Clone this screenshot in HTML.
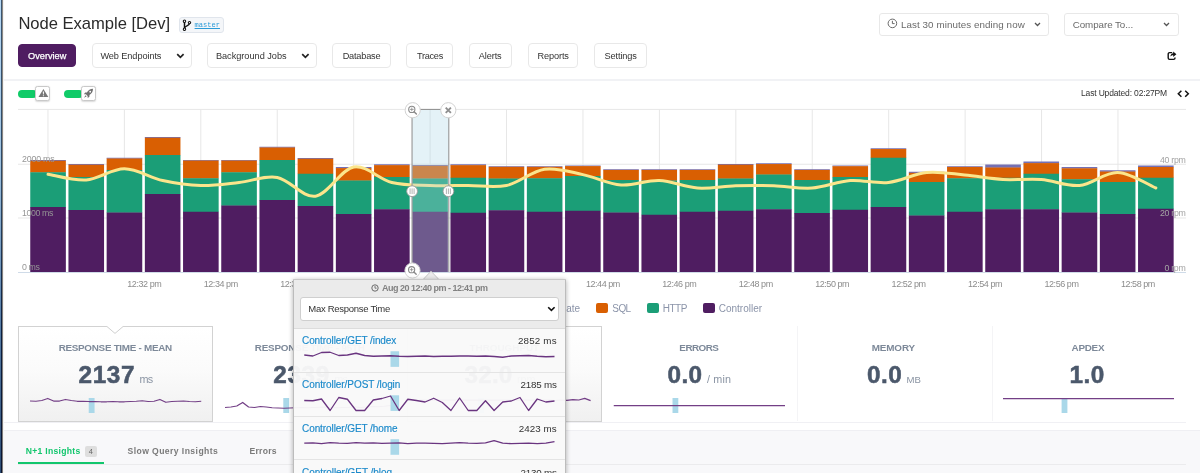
<!DOCTYPE html>
<html><head><meta charset="utf-8"><title>Node Example [Dev]</title>
<style>
html,body{margin:0;padding:0;}
body{width:1200px;height:473px;overflow:hidden;background:#fff;position:relative;font-family:"Liberation Sans",sans-serif;}
#root{position:absolute;left:0;top:0;width:1200px;height:473px;overflow:hidden;will-change:transform;}
.abs{position:absolute;}
.t{position:absolute;white-space:pre;line-height:1;}
.nb{position:absolute;top:43px;height:25px;box-sizing:border-box;border:1px solid #e8e8e8;border-radius:4px;background:#fff;}
.nb.on{background:#4f1d61;border-color:#4f1d61;top:44px;height:23px;}
.dd{position:absolute;top:13px;height:22.5px;box-sizing:border-box;border:1px solid #e8e8e8;border-radius:3px;background:#fff;}
.pill{position:absolute;top:89.6px;height:8px;width:19px;border-radius:4px;background:#10cb68;}
.tg{position:absolute;top:86px;width:14.8px;height:15px;box-sizing:border-box;border:1px solid #c9c9c9;border-radius:2.5px;background:#fff;box-shadow:0 0.5px 1.5px rgba(0,0,0,.15);}
.card{position:absolute;top:326px;height:96px;width:194.8px;box-sizing:border-box;border:1px solid #d2d2d2;background:linear-gradient(#ffffff 0%,#fbfbfb 45%,#f0f0f0 100%);}
.vs{position:absolute;top:326px;height:95px;width:1px;background:#f4f4f6;}
.lg{position:absolute;top:303px;width:12px;height:10px;border-radius:2px;}
#pop{position:absolute;left:293px;top:279px;width:273px;height:200px;box-sizing:border-box;border:1px solid #bcbcbc;border-top-color:#c8c8c8;border-radius:1px 1px 0 0;box-shadow:0 1px 5px rgba(0,0,0,.32);}
#pop .hd{position:absolute;left:0;right:0;top:0;height:48px;background:#ebebeb;}
#pop .list{position:absolute;left:0;right:0;top:48px;bottom:0;background:rgba(249,249,249,0.96);border-top:1px solid #dcdcdc;}
#pop .sep{position:absolute;left:0;right:0;height:1px;background:#e4e4e4;}
#pop .sel{position:absolute;left:6px;top:17px;width:258.6px;height:24px;box-sizing:border-box;border:1px solid #cfcfcf;border-radius:3px;background:#fff;}
</style></head><body>
<div id="root">
<!-- left edge strip -->
<div class="abs" style="left:0;top:0;width:1px;height:473px;background:linear-gradient(#b6d8f4 0%,#9cc0de 35%,#5d84ad 65%,#2c4c74 100%)"></div>
<div class="abs" style="left:1px;top:0;width:1px;height:473px;background:linear-gradient(#3d5670 0%,#2c4763 40%,#0c1f3f 70%,#0a1530 100%)"></div>
<div class="abs" style="left:2px;top:0;width:1px;height:473px;background:linear-gradient(#8d8a86,#7d7a78)"></div>
<div class="abs" style="left:3px;top:0;width:1px;height:473px;background:#f4f4f4"></div>

<!-- header -->
<div class="abs" style="left:179.2px;top:17px;width:44.8px;height:15.5px;box-sizing:border-box;border:1px solid #e0e5ec;border-radius:3px;background:#f4f6f9"></div>
<svg class="abs" style="left:182px;top:18.5px" width="10" height="12.5" viewBox="0 0 10 12.5"><g fill="none" stroke="#111" stroke-width="1.45"><path d="M2.5 2.6V9.8"/><path d="M7.5 4.2c0 2.9-5 2.3-5 5"/></g><g fill="#fff" stroke="#111" stroke-width="1.05"><circle cx="2.5" cy="2.2" r="1.2"/><circle cx="2.5" cy="10.2" r="1.2"/><circle cx="7.5" cy="3.6" r="1.2"/></g></svg>
<div class="dd" style="left:879px;width:170px"></div>
<div class="dd" style="left:1064.2px;width:114.5px"></div>
<svg class="abs" style="left:886.5px;top:18px" width="11" height="11" viewBox="0 0 11 11"><circle cx="5.4" cy="5.4" r="4.3" fill="none" stroke="#6a6a6a" stroke-width="1"/><path d="M5.4 2.8V5.6H7.6" fill="none" stroke="#6a6a6a" stroke-width="1"/></svg>
<svg class="abs" style="left:1034px;top:22px" width="7" height="5" viewBox="0 0 7 5"><path d="M1 1l2.5 2.5L6 1" fill="none" stroke="#555" stroke-width="1.3"/></svg>
<svg class="abs" style="left:1163px;top:22px" width="7" height="5" viewBox="0 0 7 5"><path d="M1 1l2.5 2.5L6 1" fill="none" stroke="#555" stroke-width="1.3"/></svg>
<div class="nb on" style="left:18.4px;width:57.6px"></div><div class="nb " style="left:92.0px;width:99.5px"></div><div class="nb " style="left:207.0px;width:109.8px"></div><div class="nb " style="left:332.2px;width:58.4px"></div><div class="nb " style="left:406.4px;width:46.8px"></div><div class="nb " style="left:469.3px;width:42.5px"></div><div class="nb " style="left:527.7px;width:50.7px"></div><div class="nb " style="left:594.3px;width:52.4px"></div>
<svg class="abs" style="left:176px;top:53px" width="9" height="6" viewBox="0 0 9 6"><path d="M1.2 1.2l3.2 3.2 3.2-3.2" fill="none" stroke="#222" stroke-width="1.7"/></svg>
<svg class="abs" style="left:300.5px;top:53px" width="9" height="6" viewBox="0 0 9 6"><path d="M1.2 1.2l3.2 3.2 3.2-3.2" fill="none" stroke="#222" stroke-width="1.7"/></svg>
<svg class="abs" style="left:1166.5px;top:51px" width="10" height="10" viewBox="0 0 10 10"><path d="M5.2 1.6H2.6a1.4 1.4 0 0 0-1.4 1.4v4a1.4 1.4 0 0 0 1.4 1.4h4a1.4 1.4 0 0 0 1.4-1.4V6.4" fill="none" stroke="#111" stroke-width="1.4"/><path d="M6.2 0.6L9.4 3.3 6.2 6V4.3C4.8 4.3 4 4.8 3.4 5.8 3.5 3.7 4.6 2.5 6.2 2.3z" fill="#111"/></svg>
<div class="abs" style="left:4px;top:79.3px;width:1196px;height:1.6px;background:#f1f2f5"></div>
<!-- toggles -->
<div class="pill" style="left:17.8px"></div><div class="tg" style="left:35.2px"></div>
<div class="pill" style="left:64px"></div><div class="tg" style="left:81px;width:15px"></div>
<svg class="abs" style="left:37.5px;top:88px" width="11" height="10" viewBox="0 0 11 10"><path d="M5.4 0.9L10.3 9.1H0.5z" fill="#777"/><path d="M4.8 3.6h1.2l-.2 3h-.8zM4.9 7.2h1v1h-1z" fill="#fff"/></svg>
<svg class="abs" style="left:82.8px;top:88.2px" width="11" height="11" viewBox="0 0 11 11"><g fill="#707070"><path d="M10 0.8C7.2 0.9 5.2 2.2 3.9 4.4L2.2 4.5 0.9 6.2 2.9 6.3 4.6 8 4.7 10 6.4 8.7 6.5 7C8.7 5.7 10 3.7 10 0.8z"/><path d="M2.6 7.2L1 9.8 3.7 8.3z"/></g><circle cx="7.2" cy="3.7" r="0.9" fill="#fff"/></svg>
<svg class="abs" style="left:1177px;top:89.5px" width="13" height="8" viewBox="0 0 13 8"><path d="M4.4 0.8L1.3 3.8 4.4 6.8M8.2 0.8l3.1 3-3.1 3" fill="none" stroke="#111" stroke-width="1.5"/></svg>
<svg class="abs" style="left:0;top:0" width="1200" height="300" viewBox="0 0 1200 300"><rect x="47.45" y="109.4" width="1" height="162.6" fill="#e7e7e7"/>
<rect x="123.88" y="109.4" width="1" height="162.6" fill="#e7e7e7"/>
<rect x="200.31" y="109.4" width="1" height="162.6" fill="#e7e7e7"/>
<rect x="276.74" y="109.4" width="1" height="162.6" fill="#e7e7e7"/>
<rect x="353.17" y="109.4" width="1" height="162.6" fill="#e7e7e7"/>
<rect x="429.60" y="109.4" width="1" height="162.6" fill="#e7e7e7"/>
<rect x="506.03" y="109.4" width="1" height="162.6" fill="#e7e7e7"/>
<rect x="582.46" y="109.4" width="1" height="162.6" fill="#e7e7e7"/>
<rect x="658.89" y="109.4" width="1" height="162.6" fill="#e7e7e7"/>
<rect x="735.32" y="109.4" width="1" height="162.6" fill="#e7e7e7"/>
<rect x="811.75" y="109.4" width="1" height="162.6" fill="#e7e7e7"/>
<rect x="888.18" y="109.4" width="1" height="162.6" fill="#e7e7e7"/>
<rect x="964.61" y="109.4" width="1" height="162.6" fill="#e7e7e7"/>
<rect x="1041.04" y="109.4" width="1" height="162.6" fill="#e7e7e7"/>
<rect x="1117.47" y="109.4" width="1" height="162.6" fill="#e7e7e7"/>
<rect x="18" y="108.90" width="1168" height="1" fill="#e7e7e7"/>
<rect x="18" y="163.75" width="1168" height="1" fill="#e7e7e7"/>
<rect x="18" y="217.50" width="1168" height="1" fill="#e7e7e7"/>
<rect x="18" y="272" width="1168" height="1" fill="#cfdbe8"/>
<rect x="30.25" y="160.00" width="35.60" height="1.05" fill="#7570b3"/>
<rect x="30.25" y="160.75" width="35.60" height="11.80" fill="#d95f02"/>
<rect x="30.25" y="172.25" width="35.60" height="35.05" fill="#1b9e77"/>
<rect x="30.25" y="207.00" width="35.60" height="65.00" fill="#4f1d61"/>
<rect x="68.45" y="164.00" width="35.60" height="1.05" fill="#7570b3"/>
<rect x="68.45" y="164.75" width="35.60" height="12.55" fill="#d95f02"/>
<rect x="68.45" y="177.00" width="35.60" height="33.30" fill="#1b9e77"/>
<rect x="68.45" y="210.00" width="35.60" height="62.00" fill="#4f1d61"/>
<rect x="106.65" y="157.75" width="35.60" height="1.05" fill="#7570b3"/>
<rect x="106.65" y="158.50" width="35.60" height="11.80" fill="#d95f02"/>
<rect x="106.65" y="170.00" width="35.60" height="42.80" fill="#1b9e77"/>
<rect x="106.65" y="212.50" width="35.60" height="59.50" fill="#4f1d61"/>
<rect x="144.85" y="137.00" width="35.60" height="1.05" fill="#7570b3"/>
<rect x="144.85" y="137.75" width="35.60" height="17.55" fill="#d95f02"/>
<rect x="144.85" y="155.00" width="35.60" height="39.30" fill="#1b9e77"/>
<rect x="144.85" y="194.00" width="35.60" height="78.00" fill="#4f1d61"/>
<rect x="183.05" y="160.00" width="35.60" height="0.90" fill="#7570b3"/>
<rect x="183.05" y="160.60" width="35.60" height="17.95" fill="#d95f02"/>
<rect x="183.05" y="178.25" width="35.60" height="33.80" fill="#1b9e77"/>
<rect x="183.05" y="211.75" width="35.60" height="60.25" fill="#4f1d61"/>
<rect x="221.25" y="160.00" width="35.60" height="0.90" fill="#7570b3"/>
<rect x="221.25" y="160.60" width="35.60" height="11.95" fill="#d95f02"/>
<rect x="221.25" y="172.25" width="35.60" height="33.55" fill="#1b9e77"/>
<rect x="221.25" y="205.50" width="35.60" height="66.50" fill="#4f1d61"/>
<rect x="259.45" y="146.75" width="35.60" height="1.05" fill="#7570b3"/>
<rect x="259.45" y="147.50" width="35.60" height="12.80" fill="#d95f02"/>
<rect x="259.45" y="160.00" width="35.60" height="40.30" fill="#1b9e77"/>
<rect x="259.45" y="200.00" width="35.60" height="72.00" fill="#4f1d61"/>
<rect x="297.65" y="158.00" width="35.60" height="1.05" fill="#7570b3"/>
<rect x="297.65" y="158.75" width="35.60" height="15.30" fill="#d95f02"/>
<rect x="297.65" y="173.75" width="35.60" height="32.55" fill="#1b9e77"/>
<rect x="297.65" y="206.00" width="35.60" height="66.00" fill="#4f1d61"/>
<rect x="335.85" y="167.00" width="35.60" height="1.40" fill="#7570b3"/>
<rect x="335.85" y="168.10" width="35.60" height="12.70" fill="#d95f02"/>
<rect x="335.85" y="180.50" width="35.60" height="33.80" fill="#1b9e77"/>
<rect x="335.85" y="214.00" width="35.60" height="58.00" fill="#4f1d61"/>
<rect x="374.05" y="164.25" width="35.60" height="1.20" fill="#7570b3"/>
<rect x="374.05" y="165.15" width="35.60" height="12.15" fill="#d95f02"/>
<rect x="374.05" y="177.00" width="35.60" height="32.55" fill="#1b9e77"/>
<rect x="374.05" y="209.25" width="35.60" height="62.75" fill="#4f1d61"/>
<rect x="412.25" y="165.00" width="35.60" height="1.10" fill="#7570b3"/>
<rect x="412.25" y="165.80" width="35.60" height="13.00" fill="#d95f02"/>
<rect x="412.25" y="178.50" width="35.60" height="33.55" fill="#1b9e77"/>
<rect x="412.25" y="211.75" width="35.60" height="60.25" fill="#4f1d61"/>
<rect x="450.45" y="164.25" width="35.60" height="1.20" fill="#7570b3"/>
<rect x="450.45" y="165.15" width="35.60" height="12.90" fill="#d95f02"/>
<rect x="450.45" y="177.75" width="35.60" height="35.30" fill="#1b9e77"/>
<rect x="450.45" y="212.75" width="35.60" height="59.25" fill="#4f1d61"/>
<rect x="488.65" y="166.25" width="35.60" height="0.90" fill="#7570b3"/>
<rect x="488.65" y="166.85" width="35.60" height="11.95" fill="#d95f02"/>
<rect x="488.65" y="178.50" width="35.60" height="32.05" fill="#1b9e77"/>
<rect x="488.65" y="210.25" width="35.60" height="61.75" fill="#4f1d61"/>
<rect x="526.85" y="166.25" width="35.60" height="0.90" fill="#7570b3"/>
<rect x="526.85" y="166.85" width="35.60" height="11.70" fill="#d95f02"/>
<rect x="526.85" y="178.25" width="35.60" height="33.80" fill="#1b9e77"/>
<rect x="526.85" y="211.75" width="35.60" height="60.25" fill="#4f1d61"/>
<rect x="565.05" y="165.50" width="35.60" height="0.90" fill="#7570b3"/>
<rect x="565.05" y="166.10" width="35.60" height="10.20" fill="#d95f02"/>
<rect x="565.05" y="176.00" width="35.60" height="35.05" fill="#1b9e77"/>
<rect x="565.05" y="210.75" width="35.60" height="61.25" fill="#4f1d61"/>
<rect x="603.25" y="169.25" width="35.60" height="1.00" fill="#7570b3"/>
<rect x="603.25" y="169.95" width="35.60" height="10.35" fill="#d95f02"/>
<rect x="603.25" y="180.00" width="35.60" height="32.80" fill="#1b9e77"/>
<rect x="603.25" y="212.50" width="35.60" height="59.50" fill="#4f1d61"/>
<rect x="641.45" y="169.25" width="35.60" height="1.00" fill="#7570b3"/>
<rect x="641.45" y="169.95" width="35.60" height="10.85" fill="#d95f02"/>
<rect x="641.45" y="180.50" width="35.60" height="34.55" fill="#1b9e77"/>
<rect x="641.45" y="214.75" width="35.60" height="57.25" fill="#4f1d61"/>
<rect x="679.65" y="169.25" width="35.60" height="1.00" fill="#7570b3"/>
<rect x="679.65" y="169.95" width="35.60" height="10.35" fill="#d95f02"/>
<rect x="679.65" y="180.00" width="35.60" height="32.05" fill="#1b9e77"/>
<rect x="679.65" y="211.75" width="35.60" height="60.25" fill="#4f1d61"/>
<rect x="717.85" y="164.00" width="35.60" height="1.00" fill="#7570b3"/>
<rect x="717.85" y="164.70" width="35.60" height="14.10" fill="#d95f02"/>
<rect x="717.85" y="178.50" width="35.60" height="32.55" fill="#1b9e77"/>
<rect x="717.85" y="210.75" width="35.60" height="61.25" fill="#4f1d61"/>
<rect x="756.05" y="163.25" width="35.60" height="1.10" fill="#7570b3"/>
<rect x="756.05" y="164.05" width="35.60" height="10.75" fill="#d95f02"/>
<rect x="756.05" y="174.50" width="35.60" height="35.05" fill="#1b9e77"/>
<rect x="756.05" y="209.25" width="35.60" height="62.75" fill="#4f1d61"/>
<rect x="794.25" y="169.25" width="35.60" height="1.00" fill="#7570b3"/>
<rect x="794.25" y="169.95" width="35.60" height="10.35" fill="#d95f02"/>
<rect x="794.25" y="180.00" width="35.60" height="33.30" fill="#1b9e77"/>
<rect x="794.25" y="213.00" width="35.60" height="59.00" fill="#4f1d61"/>
<rect x="832.45" y="165.50" width="35.60" height="1.00" fill="#7570b3"/>
<rect x="832.45" y="166.20" width="35.60" height="11.10" fill="#d95f02"/>
<rect x="832.45" y="177.00" width="35.60" height="33.05" fill="#1b9e77"/>
<rect x="832.45" y="209.75" width="35.60" height="62.25" fill="#4f1d61"/>
<rect x="870.65" y="148.25" width="35.60" height="1.10" fill="#7570b3"/>
<rect x="870.65" y="149.05" width="35.60" height="9.00" fill="#d95f02"/>
<rect x="870.65" y="157.75" width="35.60" height="49.55" fill="#1b9e77"/>
<rect x="870.65" y="207.00" width="35.60" height="65.00" fill="#4f1d61"/>
<rect x="908.85" y="171.75" width="35.60" height="1.40" fill="#7570b3"/>
<rect x="908.85" y="172.85" width="35.60" height="9.45" fill="#d95f02"/>
<rect x="908.85" y="182.00" width="35.60" height="33.80" fill="#1b9e77"/>
<rect x="908.85" y="215.50" width="35.60" height="56.50" fill="#4f1d61"/>
<rect x="947.05" y="166.25" width="35.60" height="1.00" fill="#7570b3"/>
<rect x="947.05" y="166.95" width="35.60" height="11.60" fill="#d95f02"/>
<rect x="947.05" y="178.25" width="35.60" height="33.80" fill="#1b9e77"/>
<rect x="947.05" y="211.75" width="35.60" height="60.25" fill="#4f1d61"/>
<rect x="985.25" y="164.50" width="35.60" height="3.30" fill="#7570b3"/>
<rect x="985.25" y="167.50" width="35.60" height="10.55" fill="#d95f02"/>
<rect x="985.25" y="177.75" width="35.60" height="31.80" fill="#1b9e77"/>
<rect x="985.25" y="209.25" width="35.60" height="62.75" fill="#4f1d61"/>
<rect x="1023.45" y="161.50" width="35.60" height="1.90" fill="#7570b3"/>
<rect x="1023.45" y="163.10" width="35.60" height="10.95" fill="#d95f02"/>
<rect x="1023.45" y="173.75" width="35.60" height="35.80" fill="#1b9e77"/>
<rect x="1023.45" y="209.25" width="35.60" height="62.75" fill="#4f1d61"/>
<rect x="1061.65" y="167.00" width="35.60" height="1.60" fill="#7570b3"/>
<rect x="1061.65" y="168.30" width="35.60" height="11.25" fill="#d95f02"/>
<rect x="1061.65" y="179.25" width="35.60" height="33.55" fill="#1b9e77"/>
<rect x="1061.65" y="212.50" width="35.60" height="59.50" fill="#4f1d61"/>
<rect x="1099.85" y="170.25" width="35.60" height="1.60" fill="#7570b3"/>
<rect x="1099.85" y="171.55" width="35.60" height="10.75" fill="#d95f02"/>
<rect x="1099.85" y="182.00" width="35.60" height="32.30" fill="#1b9e77"/>
<rect x="1099.85" y="214.00" width="35.60" height="58.00" fill="#4f1d61"/>
<rect x="1138.05" y="165.50" width="35.60" height="1.80" fill="#7570b3"/>
<rect x="1138.05" y="167.00" width="35.60" height="11.05" fill="#d95f02"/>
<rect x="1138.05" y="177.75" width="35.60" height="31.30" fill="#1b9e77"/>
<rect x="1138.05" y="208.75" width="35.60" height="63.25" fill="#4f1d61"/></svg>
<span class="t" style="left:22.00px;top:155.35px;font-size:8.8px;color:#969696;letter-spacing:-0.179px;">2000 ms</span>
<span class="t" style="left:22.00px;top:209.10px;font-size:8.8px;color:#969696;letter-spacing:-0.393px;">1000 ms</span>
<span class="t" style="left:22.00px;top:263.35px;font-size:8.8px;color:#969696;letter-spacing:-0.395px;">0 ms</span>
<span class="t" style="left:1160.00px;top:155.55px;font-size:8.8px;color:#a4a4a4;letter-spacing:-0.315px;">40 rpm</span>
<span class="t" style="left:1160.00px;top:209.30px;font-size:8.8px;color:#a4a4a4;letter-spacing:-0.315px;">20 rpm</span>
<span class="t" style="left:1164.50px;top:263.55px;font-size:8.8px;color:#a4a4a4;letter-spacing:-0.300px;">0 rpm</span>
<span class="t" style="left:127.30px;top:279.88px;font-size:9px;color:#8c8c8c;letter-spacing:-0.441px;">12:32 pm</span>
<span class="t" style="left:203.73px;top:279.88px;font-size:9px;color:#8c8c8c;letter-spacing:-0.441px;">12:34 pm</span>
<span class="t" style="left:280.16px;top:279.88px;font-size:9px;color:#8c8c8c;letter-spacing:-0.441px;">12:36 pm</span>
<span class="t" style="left:356.59px;top:279.88px;font-size:9px;color:#8c8c8c;letter-spacing:-0.441px;">12:38 pm</span>
<span class="t" style="left:433.02px;top:279.88px;font-size:9px;color:#8c8c8c;letter-spacing:-0.441px;">12:40 pm</span>
<span class="t" style="left:509.45px;top:279.88px;font-size:9px;color:#8c8c8c;letter-spacing:-0.441px;">12:42 pm</span>
<span class="t" style="left:585.88px;top:279.88px;font-size:9px;color:#8c8c8c;letter-spacing:-0.441px;">12:44 pm</span>
<span class="t" style="left:662.31px;top:279.88px;font-size:9px;color:#8c8c8c;letter-spacing:-0.441px;">12:46 pm</span>
<span class="t" style="left:738.74px;top:279.88px;font-size:9px;color:#8c8c8c;letter-spacing:-0.441px;">12:48 pm</span>
<span class="t" style="left:815.17px;top:279.88px;font-size:9px;color:#8c8c8c;letter-spacing:-0.441px;">12:50 pm</span>
<span class="t" style="left:891.60px;top:279.88px;font-size:9px;color:#8c8c8c;letter-spacing:-0.441px;">12:52 pm</span>
<span class="t" style="left:968.03px;top:279.88px;font-size:9px;color:#8c8c8c;letter-spacing:-0.441px;">12:54 pm</span>
<span class="t" style="left:1044.46px;top:279.88px;font-size:9px;color:#8c8c8c;letter-spacing:-0.441px;">12:56 pm</span>
<span class="t" style="left:1120.89px;top:279.88px;font-size:9px;color:#8c8c8c;letter-spacing:-0.441px;">12:58 pm</span>
<svg class="abs" style="left:0;top:0" width="1200" height="300" viewBox="0 0 1200 300"><path d="M48.05 174.25 C54.42 175.21 73.52 180.92 86.25 180.00 C98.98 179.08 111.72 168.67 124.45 168.75 C137.18 168.83 149.92 177.71 162.65 180.50 C175.38 183.29 188.12 185.17 200.85 185.50 C213.58 185.83 226.32 183.83 239.05 182.50 C251.78 181.17 264.52 175.21 277.25 177.50 C289.98 179.79 302.72 198.00 315.45 196.25 C328.18 194.50 340.92 169.29 353.65 167.00 C366.38 164.71 379.12 179.42 391.85 182.50 C404.58 185.58 417.32 185.00 430.05 185.50 C442.78 186.00 455.52 185.50 468.25 185.50 C480.98 185.50 493.72 188.21 506.45 185.50 C519.18 182.79 531.92 171.07 544.65 169.25 C557.38 167.43 570.12 171.97 582.85 174.60 C595.58 177.22 608.32 184.02 621.05 185.00 C633.78 185.98 646.52 180.00 659.25 180.50 C671.98 181.00 684.72 187.12 697.45 188.00 C710.18 188.88 722.92 186.12 735.65 185.75 C748.38 185.38 761.12 185.38 773.85 185.75 C786.58 186.12 799.32 188.88 812.05 188.00 C824.78 187.12 837.52 181.42 850.25 180.50 C862.98 179.58 875.72 183.83 888.45 182.50 C901.18 181.17 913.92 173.75 926.65 172.50 C939.38 171.25 952.12 173.83 964.85 175.00 C977.58 176.17 990.32 178.75 1003.05 179.50 C1015.78 180.25 1028.52 178.50 1041.25 179.50 C1053.98 180.50 1066.72 186.67 1079.45 185.50 C1092.18 184.33 1104.92 172.08 1117.65 172.50 C1130.38 172.92 1149.48 185.42 1155.85 188.00" fill="none" stroke="#fbe58c" stroke-width="3" stroke-linecap="round" stroke-linejoin="round"/></svg>
<svg class="abs" style="left:0;top:0" width="1200" height="300" viewBox="0 0 1200 300">
<rect x="412" y="109.4" width="36.8" height="162.6" fill="rgba(173,216,230,0.33)"/>
<rect x="411.4" y="109" width="1.3" height="163" fill="rgba(150,150,150,0.85)"/>
<rect x="448.1" y="109" width="1.3" height="163" fill="rgba(150,150,150,0.85)"/>
<rect x="411.4" y="108.9" width="38" height="1.1" fill="rgba(140,140,140,0.9)"/>
<g fill="#fff" stroke="#d2d2d2" stroke-width="1">
<circle cx="412.7" cy="110.2" r="7.6"/><circle cx="448.3" cy="110.2" r="7.6"/><circle cx="412.5" cy="270.5" r="7.6"/>
</g>
<g fill="#fff" stroke="#9a9a9a" stroke-width="0.9">
<circle cx="412.1" cy="191.2" r="5.4"/><circle cx="448.4" cy="191.2" r="5.4"/>
</g>
<g stroke="#aaa" stroke-width="0.9">
<path d="M410.1 188.4v5.6M412.1 188.4v5.6M414.1 188.4v5.6M446.4 188.4v5.6M448.4 188.4v5.6M450.4 188.4v5.6"/>
</g>
<g fill="none" stroke="#8a8a8a" stroke-width="1.1" stroke-linecap="round">
<circle cx="411.8" cy="109.4" r="3.1"/><path d="M414.1 111.7L416.4 114" stroke-width="1.4"/><path d="M410.3 109.4h3M411.8 107.9v3" stroke-width="0.8"/>
<circle cx="411.6" cy="269.7" r="3.1"/><path d="M413.9 272L416.2 274.3" stroke-width="1.4"/><path d="M410.1 269.7h3M411.6 268.2v3" stroke-width="0.8"/>
</g>
<path d="M445.7 107.6l5.2 5.2M450.9 107.6l-5.2 5.2" stroke="#8f8f8f" stroke-width="1.9" fill="none"/>
</svg>
<div class="lg" style="left:523px;background:#7570b3"></div><div class="lg" style="left:596.2px;background:#d95f02"></div><div class="lg" style="left:646.6px;background:#1b9e77"></div><div class="lg" style="left:702.7px;background:#4f1d61"></div>
<div class="card" style="left:18px"></div><div class="card" style="left:407px"></div>
<svg class="abs" style="left:106px;top:325px" width="18" height="10" viewBox="0 0 18 10"><path d="M0.9 0.5H17.1V1.6L9 8.6 0.9 1.6z" fill="#fff"/><path d="M0.9 1.5L9 8.4 17.1 1.5" fill="none" stroke="#cfcfcf" stroke-width="1"/></svg>
<div class="vs" style="left:797px"></div><div class="vs" style="left:991.5px"></div>
<div class="abs" style="left:4px;top:422px;width:1182px;height:1px;background:#f0f0f4"></div>
<div class="abs" style="left:4px;top:429.6px;width:1196px;height:44px;background:#f8f8fa;border-top:1px solid #efeff3"></div>
<div class="abs" style="left:18px;top:463.8px;width:1168px;height:1.2px;background:#ebebed"></div>
<div class="abs" style="left:18px;top:461.5px;width:86.3px;height:2.6px;background:#12c66d"></div>
<div class="abs" style="left:85px;top:446px;width:11.8px;height:10.6px;border-radius:2px;background:#dedede"></div>
<svg class="abs" style="left:0;top:0" width="1200" height="473" viewBox="0 0 1200 473"><rect x="88.75" y="398.00" width="5.80" height="15.00" fill="#a5d6e8" opacity="0.95"/><path d="M30.00 401.00 L35.91 401.25 L41.81 400.50 L47.72 398.50 L53.62 401.00 L59.53 401.00 L65.43 399.50 L71.34 400.50 L77.24 401.25 L83.15 401.25 L89.05 401.50 L94.96 401.50 L100.86 401.75 L106.77 401.75 L112.67 401.50 L118.58 401.75 L124.48 401.75 L130.39 401.50 L136.29 401.25 L142.20 400.75 L148.10 401.50 L154.01 401.25 L159.91 399.50 L165.82 402.25 L171.72 401.50 L177.63 401.25 L183.53 401.00 L189.44 401.50 L195.34 401.75 L201.25 401.25" fill="none" stroke="#733f86" stroke-width="1.25" stroke-linejoin="round"/><rect x="283.30" y="398.00" width="5.80" height="15.00" fill="#a5d6e8" opacity="0.95"/><path d="M225.00 407.50 L230.90 407.00 L236.79 406.00 L242.69 402.50 L248.59 407.00 L254.48 407.50 L260.38 406.50 L266.28 407.00 L272.17 407.75 L278.07 408.00 L283.97 408.25 L289.86 408.00 L295.76 407.75 L301.66 407.50 L307.55 407.75 L313.45 407.50 L319.34 407.25 L325.24 407.00 L331.14 407.50 L337.03 407.75 L342.93 407.50 L348.83 407.25 L354.72 406.75 L360.62 407.50 L366.52 407.00 L372.41 406.50 L378.31 406.75 L384.21 406.25 L390.10 405.50 L396.00 407.00" fill="none" stroke="#733f86" stroke-width="1.25" stroke-linejoin="round"/><rect x="478.00" y="398.00" width="5.80" height="15.00" fill="#a5d6e8" opacity="0.95"/><path d="M419.30 400.00 L425.21 400.00 L431.11 400.00 L437.02 400.00 L442.93 400.00 L448.83 400.00 L454.74 400.00 L460.65 400.00 L466.56 400.00 L472.46 400.00 L478.37 400.00 L484.28 400.00 L490.18 400.00 L496.09 400.00 L502.00 400.00 L507.90 400.00 L513.81 400.00 L519.72 400.00 L525.62 400.00 L531.53 400.00 L537.44 400.00 L543.34 400.00 L549.25 400.00 L555.16 400.50 L561.07 400.00 L566.97 400.30 L572.88 399.60 L578.79 400.00 L584.69 398.30 L590.60 400.60" fill="none" stroke="#733f86" stroke-width="1.25" stroke-linejoin="round"/><rect x="672.50" y="398.00" width="5.80" height="15.00" fill="#a5d6e8" opacity="0.95"/><path d="M613.75 405.50 L785.00 405.50" fill="none" stroke="#733f86" stroke-width="1.25" stroke-linejoin="round"/><rect x="1061.60" y="398.00" width="5.80" height="15.00" fill="#a5d6e8" opacity="0.95"/><path d="M1003.00 398.50 L1174.00 398.50" fill="none" stroke="#733f86" stroke-width="1.25" stroke-linejoin="round"/></svg>
<span class="t" style="left:18.40px;top:16.45px;font-size:16.6px;color:#2b2b2b;letter-spacing:-0.033px;">Node Example [Dev]</span>
<span class="t" style="left:194.60px;top:21.77px;font-size:7px;font-family:'Liberation Mono', monospace;color:#2b9bd8;letter-spacing:0.030px;text-decoration:underline;">master</span>
<span class="t" style="left:901.00px;top:20.30px;font-size:9.8px;color:#6a6a6a;letter-spacing:0.069px;">Last 30 minutes ending now</span>
<span class="t" style="left:1072.70px;top:19.90px;font-size:9.8px;color:#6a6a6a;letter-spacing:-0.066px;">Compare To...</span>
<span class="t" style="left:28.00px;top:51.81px;font-size:9.2px;color:#fff;letter-spacing:0.013px;-webkit-text-stroke:0.25px #fff;">Overview</span>
<span class="t" style="left:100.40px;top:51.81px;font-size:9.2px;color:#333;letter-spacing:-0.089px;">Web Endpoints</span>
<span class="t" style="left:215.90px;top:51.81px;font-size:9.2px;color:#333;letter-spacing:-0.020px;">Background Jobs</span>
<span class="t" style="left:342.70px;top:51.81px;font-size:9.2px;color:#333;letter-spacing:-0.205px;">Database</span>
<span class="t" style="left:416.90px;top:51.81px;font-size:9.2px;color:#333;letter-spacing:-0.275px;">Traces</span>
<span class="t" style="left:478.70px;top:51.81px;font-size:9.2px;color:#333;letter-spacing:-0.100px;">Alerts</span>
<span class="t" style="left:537.60px;top:51.81px;font-size:9.2px;color:#333;letter-spacing:-0.139px;">Reports</span>
<span class="t" style="left:604.50px;top:51.81px;font-size:9.2px;color:#333;letter-spacing:-0.113px;">Settings</span>
<span class="t" style="left:1081.00px;top:88.80px;font-size:8.5px;color:#333;letter-spacing:-0.158px;">Last Updated: 02:27PM</span>
<span class="t" style="left:539.62px;top:303.64px;font-size:10px;color:#8b94a9;letter-spacing:0.000px;">Template</span>
<span class="t" style="left:612.30px;top:303.64px;font-size:10px;color:#8b94a9;letter-spacing:-0.572px;">SQL</span>
<span class="t" style="left:662.70px;top:303.64px;font-size:10px;color:#8b94a9;letter-spacing:-0.452px;">HTTP</span>
<span class="t" style="left:718.80px;top:303.64px;font-size:10px;color:#8b94a9;letter-spacing:-0.016px;">Controller</span>
<span class="t" style="left:58.64px;top:342.92px;font-size:9.9px;font-weight:700;color:#7d8999;letter-spacing:-0.291px;">RESPONSE TIME - MEAN</span>
<span class="t" style="left:78.50px;top:362.83px;font-size:24.3px;font-weight:700;color:#4b586b;letter-spacing:0.672px;-webkit-text-stroke:0.55px #4b586b;">2137</span>
<span class="t" style="left:139.50px;top:374.26px;font-size:10.8px;color:#8a94a3;letter-spacing:-0.703px;">ms</span>
<span class="t" style="left:254.80px;top:342.92px;font-size:9.9px;font-weight:700;color:#7d8999;letter-spacing:-0.207px;">RESPONSE TIME - 95TH</span>
<span class="t" style="left:273.25px;top:362.83px;font-size:24.3px;font-weight:700;color:#4b586b;letter-spacing:0.672px;-webkit-text-stroke:0.55px #4b586b;">2339</span>
<span class="t" style="left:334.25px;top:374.26px;font-size:10.8px;color:#8a94a3;letter-spacing:-0.703px;">ms</span>
<span class="t" style="left:469.49px;top:342.92px;font-size:9.9px;font-weight:700;color:#7d8999;letter-spacing:0.000px;">THROUGHPUT</span>
<span class="t" style="left:464.50px;top:362.83px;font-size:24.3px;font-weight:700;color:#4b586b;letter-spacing:0.176px;-webkit-text-stroke:0.55px #4b586b;">32.0</span>
<span class="t" style="left:517.00px;top:374.26px;font-size:10.8px;color:#8a94a3;letter-spacing:0.000px;">rpm</span>
<span class="t" style="left:679.36px;top:342.92px;font-size:9.9px;font-weight:700;color:#7d8999;letter-spacing:-0.542px;">ERRORS</span>
<span class="t" style="left:667.50px;top:362.83px;font-size:24.3px;font-weight:700;color:#4b586b;letter-spacing:0.406px;-webkit-text-stroke:0.55px #4b586b;">0.0</span>
<span class="t" style="left:707.00px;top:374.26px;font-size:10.8px;color:#8a94a3;letter-spacing:0.169px;">/ min</span>
<span class="t" style="left:871.78px;top:342.92px;font-size:9.9px;font-weight:700;color:#7d8999;letter-spacing:-0.146px;">MEMORY</span>
<span class="t" style="left:867.00px;top:362.83px;font-size:24.3px;font-weight:700;color:#4b586b;letter-spacing:0.540px;-webkit-text-stroke:0.55px #4b586b;">0.0</span>
<span class="t" style="left:906.60px;top:375.27px;font-size:9.6px;color:#8a94a3;letter-spacing:0.005px;">MB</span>
<span class="t" style="left:1071.57px;top:342.92px;font-size:9.9px;font-weight:700;color:#7d8999;letter-spacing:-0.266px;">APDEX</span>
<span class="t" style="left:1069.50px;top:362.83px;font-size:24.3px;font-weight:700;color:#4b586b;letter-spacing:0.440px;-webkit-text-stroke:0.55px #4b586b;">1.0</span>
<span class="t" style="left:25.75px;top:446.72px;font-size:8.6px;font-weight:700;color:#12c66d;letter-spacing:0.284px;">N+1 Insights</span>
<span class="t" style="left:88.81px;top:447.55px;font-size:7.5px;color:#666;letter-spacing:0.000px;">4</span>
<span class="t" style="left:127.50px;top:446.72px;font-size:8.6px;font-weight:700;color:#7a7a7a;letter-spacing:0.428px;">Slow Query Insights</span>
<span class="t" style="left:249.50px;top:446.72px;font-size:8.6px;font-weight:700;color:#7a7a7a;letter-spacing:0.242px;">Errors</span>
<svg class="abs" style="left:421.5px;top:270px" width="18" height="10" viewBox="0 0 18 10"><path d="M1 9.6L9 1.2 17 9.6z" fill="#ebebeb" stroke="#c6c6c6" stroke-width="1"/></svg>
<div id="pop"><div class="hd"></div><div class="list"></div><div class="sep" style="top:91.6px"></div><div class="sep" style="top:135.6px"></div><div class="sep" style="top:179.4px"></div><div class="sel"></div><svg class="abs" style="left:77.2px;top:4.0px" width="8" height="8" viewBox="0 0 8 8"><circle cx="4" cy="4" r="3.2" fill="none" stroke="#6b6b6b" stroke-width="1"/><path d="M4 2V4.2H5.6" fill="none" stroke="#6b6b6b" stroke-width="0.9"/></svg><svg class="abs" style="left:252.8px;top:26.2px" width="9" height="6" viewBox="0 0 9 6"><path d="M1.2 1.2l3.2 3.2 3.2-3.2" fill="none" stroke="#111" stroke-width="1.6"/></svg><svg class="abs" style="left:-1px;top:-1px" width="272" height="200" viewBox="0 0 272 200"><rect x="97.50" y="72.25" width="8.60" height="15.60" fill="#a5d6e8" opacity="0.95"/><path d="M11.25 76.00 L19.88 77.00 L28.51 73.50 L37.14 73.25 L45.77 76.50 L54.40 76.00 L63.03 74.25 L71.66 76.50 L80.28 77.25 L88.91 77.00 L97.54 76.75 L106.17 77.25 L114.80 77.50 L123.43 77.25 L132.06 77.00 L140.69 77.50 L149.32 77.25 L157.95 77.25 L166.58 77.00 L175.21 77.00 L183.84 77.25 L192.47 77.00 L201.09 77.50 L209.72 78.25 L218.35 77.00 L226.98 76.75 L235.61 76.50 L244.24 77.25 L252.87 77.75 L261.50 77.50" fill="none" stroke="#6a3580" stroke-width="1.3" stroke-linejoin="round"/><rect x="97.50" y="116.30" width="8.60" height="15.60" fill="#a5d6e8" opacity="0.95"/><path d="M11.25 121.50 L19.88 121.75 L28.51 120.00 L37.14 131.50 L45.77 118.50 L54.40 120.25 L63.03 131.50 L71.66 131.50 L80.28 121.00 L88.91 119.50 L97.54 117.00 L106.17 131.50 L114.80 120.25 L123.43 121.50 L132.06 123.00 L140.69 119.25 L149.32 123.50 L157.95 131.50 L166.58 119.00 L175.21 131.50 L183.84 131.50 L192.47 121.75 L201.09 131.50 L209.72 123.00 L218.35 122.00 L226.98 118.50 L235.61 131.50 L244.24 120.00 L252.87 123.00 L261.50 122.00" fill="none" stroke="#6a3580" stroke-width="1.3" stroke-linejoin="round"/><rect x="97.50" y="160.20" width="8.60" height="15.60" fill="#a5d6e8" opacity="0.95"/><path d="M11.25 164.20 L19.88 163.95 L28.51 164.70 L37.14 163.70 L45.77 164.20 L54.40 164.45 L63.03 163.70 L71.66 164.20 L80.28 163.95 L88.91 164.45 L97.54 164.20 L106.17 163.95 L114.80 164.70 L123.43 164.20 L132.06 164.20 L140.69 164.45 L149.32 164.70 L157.95 164.20 L166.58 163.70 L175.21 164.20 L183.84 164.45 L192.47 163.95 L201.09 161.70 L209.72 164.20 L218.35 164.70 L226.98 164.45 L235.61 164.20 L244.24 164.70 L252.87 164.20 L261.50 162.70" fill="none" stroke="#6a3580" stroke-width="1.3" stroke-linejoin="round"/></svg><span class="t" style="left:88.00px;top:3.58px;font-size:9.0px;font-weight:700;color:#828282;letter-spacing:-0.502px;">Aug 20 12:40 pm - 12:41 pm</span>
<span class="t" style="left:14.25px;top:23.96px;font-size:9.5px;color:#333;letter-spacing:-0.285px;">Max Response Time</span>
<span class="t" style="left:8.00px;top:56.04px;font-size:10px;color:#1a89ca;letter-spacing:-0.082px;-webkit-text-stroke:0.15px #1a89ca;">Controller/GET /index</span>
<span class="t" style="left:224.00px;top:56.20px;font-size:9.8px;color:#333;letter-spacing:0.167px;">2852 ms</span>
<span class="t" style="left:8.00px;top:100.04px;font-size:10px;color:#1a89ca;letter-spacing:-0.073px;-webkit-text-stroke:0.15px #1a89ca;">Controller/POST /login</span>
<span class="t" style="left:226.50px;top:100.20px;font-size:9.8px;color:#333;letter-spacing:-0.190px;">2185 ms</span>
<span class="t" style="left:8.00px;top:144.04px;font-size:10px;color:#1a89ca;letter-spacing:-0.079px;-webkit-text-stroke:0.15px #1a89ca;">Controller/GET /home</span>
<span class="t" style="left:224.75px;top:144.20px;font-size:9.8px;color:#333;letter-spacing:0.060px;">2423 ms</span>
<span class="t" style="left:8.00px;top:188.04px;font-size:10px;color:#1a89ca;letter-spacing:-0.048px;-webkit-text-stroke:0.15px #1a89ca;">Controller/GET /blog</span>
<span class="t" style="left:226.50px;top:188.20px;font-size:9.8px;color:#333;letter-spacing:-0.190px;">2130 ms</span></div>
</div>
</body></html>
